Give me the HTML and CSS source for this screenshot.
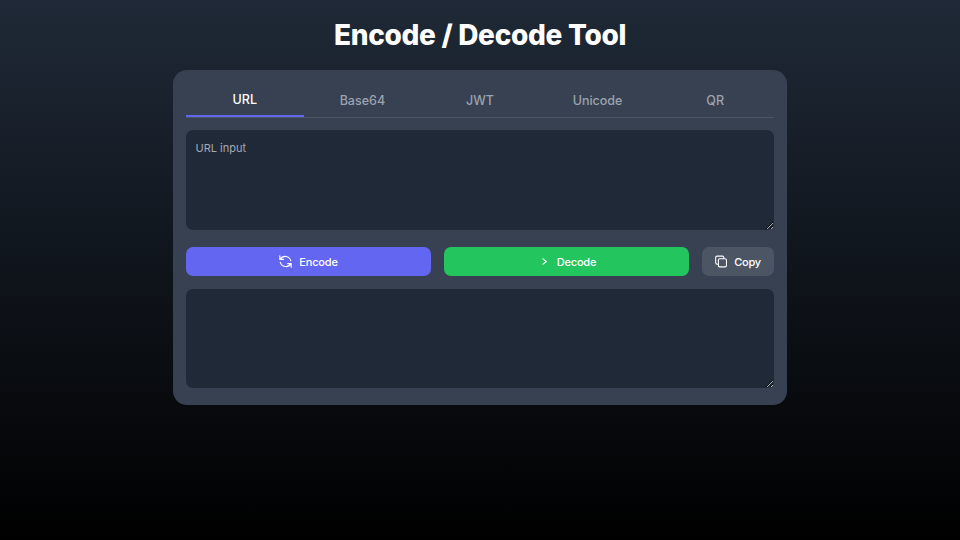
FILE: index.html
```html
<!DOCTYPE html>
<html lang="en">
<head>
    <meta charset="UTF-8">
    <meta name="viewport" content="width=device-width, initial-scale=1.0">
    <title>Encode / Decode Tool</title>
    <link rel="stylesheet" href="styles.css">
</head>
<body>
    <h1>Encode / Decode Tool</h1>
    <div class="card">
        <div class="tabs">
            <button class="tab active">URL</button>
            <button class="tab">Base64</button>
            <button class="tab">JWT</button>
            <button class="tab">Unicode</button>
            <button class="tab">QR</button>
        </div>
        <textarea class="field input" placeholder="URL input"></textarea>
        <div class="actions">
            <button class="btn btn-encode">
                <svg class="icon" viewBox="0 0 24 24"><path d="M4 4v5h.6m14.8 2A8 8 0 0 0 4.6 9m0 0H9m11 11v-5h-.6m0 0a8 8 0 0 1-14.8-2m14.800 2H15"/></svg>
                Encode
            </button>
            <button class="btn btn-decode">
                <svg class="icon" viewBox="0 0 24 24"><path d="M11.200 8.250l4.800 3.750-4.800 3.750"/></svg>
                Decode
            </button>
            <button class="btn btn-copy">
                <svg class="icon" viewBox="0 0 24 24"><path d="M8 16H6a2 2 0 0 1-2-2V6a2 2 0 0 1 2-2h8a2 2 0 0 1 2 2v2m-6 12h8a2 2 0 0 0 2-2v-8a2 2 0 0 0-2-2h-8a2 2 0 0 0-2 2v8a2 2 0 0 0 2 2z"/></svg>
                Copy
            </button>
        </div>
        <textarea class="field output"></textarea>
    </div>
</body>
</html>
```

FILE: styles.css
```css
* {
    box-sizing: border-box;
}
body {
    margin: 0;
    height: 540px;
    overflow: hidden;
    display: flex;
    flex-direction: column;
    align-items: center;
    padding-top: 16px;
    font-family: Inter, "Liberation Sans", sans-serif;
    color: white;
    background: linear-gradient(to bottom, #1f2937, #000000);
}
h1 {
    margin: 0 0 16px;
    font-size: 28px;
    line-height: 38px;
    font-weight: 800;
    letter-spacing: -0.3px;
}
.card {
    width: 614px;
    height: 335px;
    padding: 13px;
    background-color: #374151;
    border-radius: 14px;
}
.tabs {
    display: flex;
    height: 35px;
    margin-bottom: 12px;
    border-bottom: 1px solid #4b5563;
}
.tab {
    flex: 1;
    height: 34px;
    padding: 2px 0 0;
    background: none;
    border: none;
    border-bottom: 2px solid transparent;
    color: #9ca3af;
    font-family: inherit;
    font-size: 12.500px;
    font-weight: 500;
}
.tab.active {
    padding-top: 0;
    color: white;
    border-bottom-color: #6366f1;
}
.field {
    display: block;
    width: 100%;
    height: 100px;
    padding: 10px 9.500px;
    background-color: #1f2937;
    border: none;
    border-radius: 7px;
    color: white;
    font-family: inherit;
    font-size: 11px;
    line-height: 16px;
}
.field::placeholder {
    color: #a3aab5;
}
.output {
    height: 99px;
}
.actions {
    display: flex;
    gap: 13px;
    margin: 17px 0 13px;
}
.btn {
    display: flex;
    align-items: center;
    justify-content: center;
    gap: 5px;
    height: 29px;
    padding: 0 13px 0 11px;
    border: none;
    border-radius: 7px;
    color: white;
    font-family: inherit;
    font-size: 11px;
    font-weight: 500;
    letter-spacing: -0.2px;
}
.btn-encode {
    flex: 1;
    background-color: #6366f1;
}
.btn-decode {
    flex: 1;
    background-color: #22c55e;
}
.btn-copy {
    width: 72px;
    background-color: #4b5563;
}
.icon {
    width: 17px;
    height: 17px;
    fill: none;
    stroke: currentColor;
    stroke-width: 1.600;
    stroke-linecap: round;
    stroke-linejoin: round;
}
```
